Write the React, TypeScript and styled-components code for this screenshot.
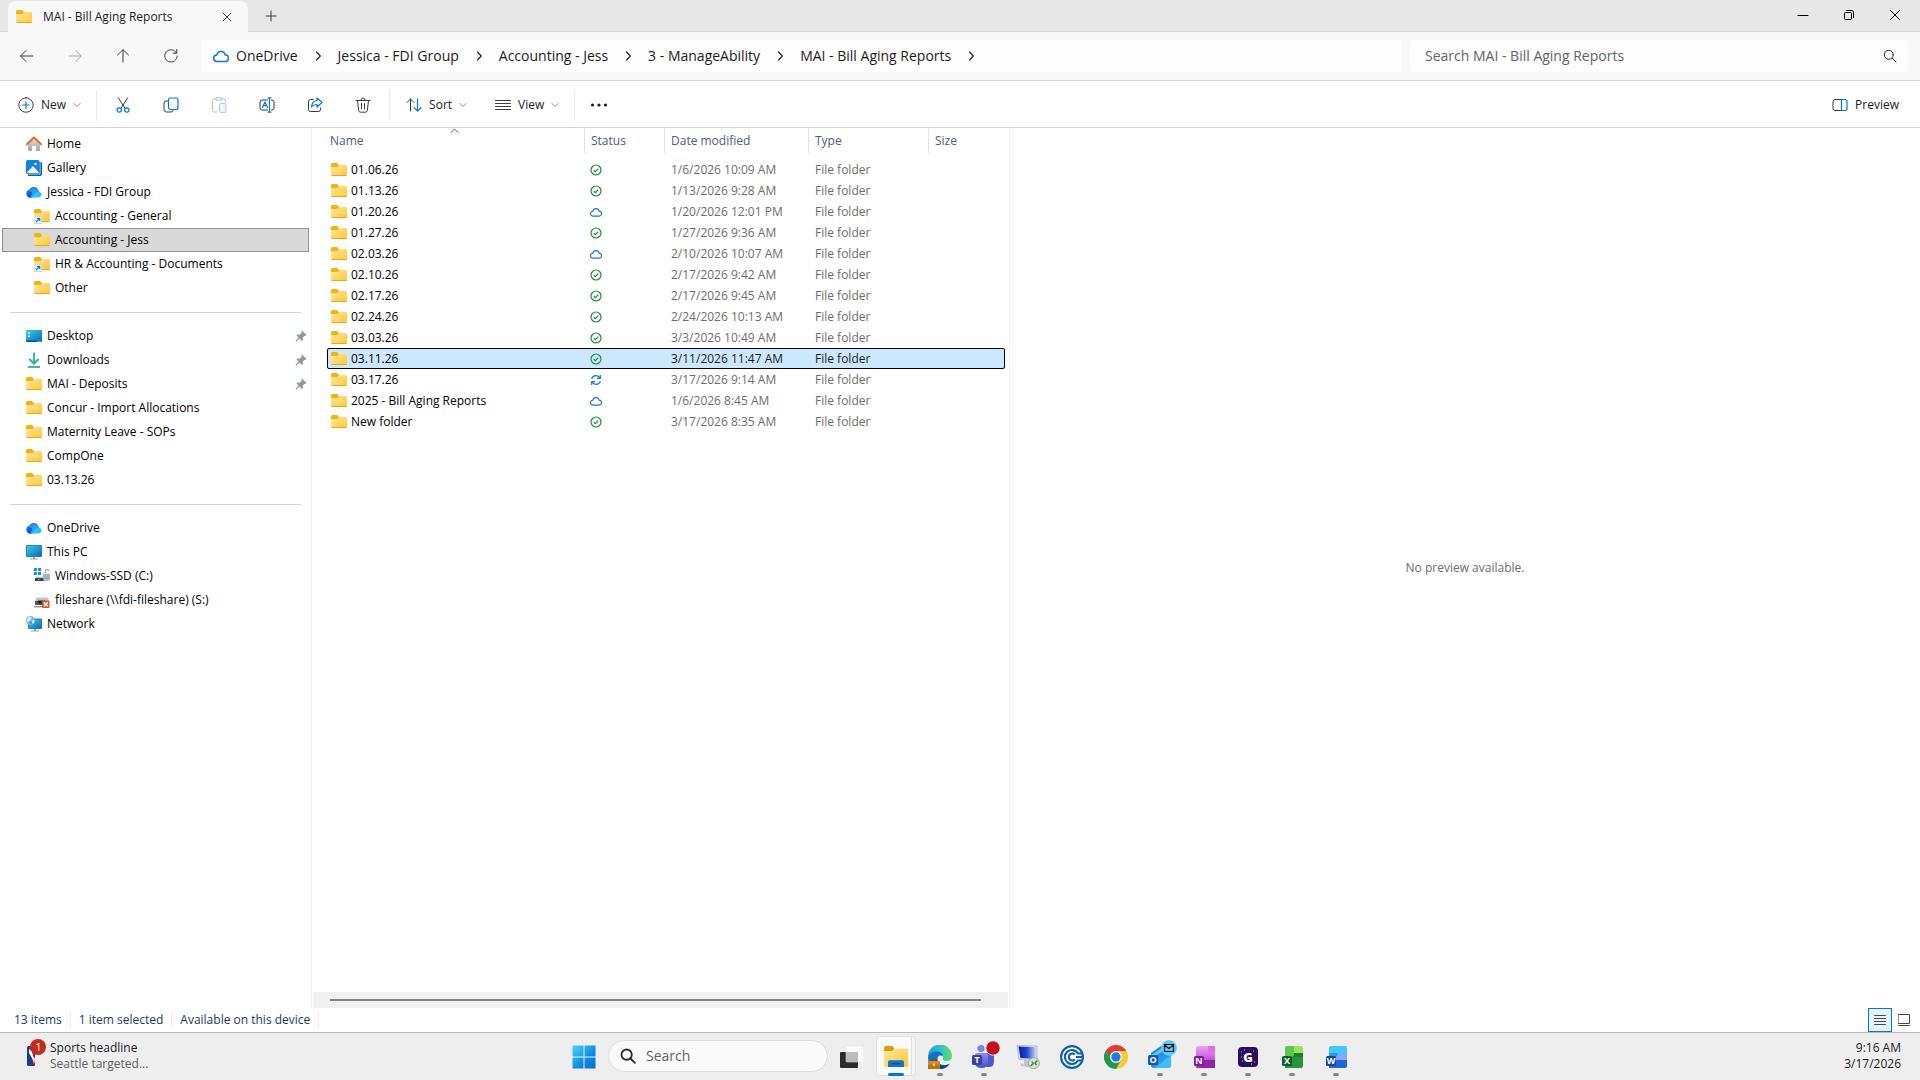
import React from "react";
import styled, { createGlobalStyle } from "styled-components";

const GlobalStyle = createGlobalStyle`
  *, *::before, *::after { box-sizing: border-box; }
  html, body { margin: 0; padding: 0; }
  body, button, input, table {
    font-family: "Segoe UI", "Open Sans", "Noto Sans", sans-serif;
    font-size: 12px;
    line-height: 16px;
  }
  body { background: #fff; color: #000; overflow: hidden; }
  button { border: 0; padding: 0; margin: 0; background: transparent; color: inherit; cursor: default; }
  a { color: inherit; text-decoration: none; cursor: default; }
  ul, ol { list-style: none; margin: 0; padding: 0; }
  svg { display: block; flex: none; }
`;

/* ---------- layout ---------- */

const Desktop = styled.div`
  display: flex;
  flex-direction: column;
  height: 100vh;
`;

const TitleBar = styled.header`
  display: flex;
  align-items: stretch;
  height: 32px;
  padding: 0 2px 0 8px;
  background: #e7e7e7;
  box-shadow: inset 0 -1px #d6d6d6;
`;

const Tab = styled.div`
  display: flex;
  align-items: center;
  width: 240px;
  margin-top: 1px;
  padding: 0 8px;
  gap: 11px;
  border-radius: 8px 8px 0 0;
  background: #f8f8f8;
  color: #1b1b1b;
  font-weight: 500;
`;

const TabTitle = styled.span`
  flex: 1;
  white-space: nowrap;
`;

const IconButton = styled.button<{ $w?: number; $h?: number }>`
  display: flex;
  align-items: center;
  justify-content: center;
  width: ${(p) => p.$w ?? 32}px;
  height: ${(p) => p.$h ?? 32}px;
  flex: none;
`;

const WindowControls = styled.div`
  display: flex;
  margin-left: auto;
`;

const NavBar = styled.nav`
  display: flex;
  align-items: center;
  height: 49px;
  padding: 0 11px 0 3px;
  background: #f8f8f8;
  border-bottom: 1px solid #d6d6d6;
`;

const AddressBar = styled.ol`
  display: flex;
  align-items: center;
  flex: 1;
  height: 32px;
  margin-left: 6px;
  padding-left: 12px;
  border-radius: 4px;
  background: #fdfdfd;
`;

const Crumb = styled.li`
  display: flex;
  align-items: center;
  color: #1b1b1b;
  white-space: nowrap;
`;

const CrumbLink = styled.a`
  display: flex;
  align-items: center;
  gap: 7px;
  font-size: 14px;
  line-height: 20px;
`;

const SearchField = styled.label`
  display: flex;
  align-items: center;
  width: 499px;
  height: 32px;
  margin-left: 8px;
  padding: 0 12px 0 15px;
  border-radius: 4px;
  background: #fdfdfd;
`;

const TextInput = styled.input`
  flex: 1;
  min-width: 0;
  padding: 0;
  border: 0;
  outline: 0;
  background: transparent;
  font-size: 14px;
  line-height: 20px;
  &::placeholder { color: #636363; opacity: 1; }
`;

const Toolbar = styled.div`
  display: flex;
  align-items: center;
  height: 47px;
  padding: 2px 21px 0 0;
  background: #fff;
  border-bottom: 1px solid #d6d6d6;
`;

const ToolGroup = styled.div<{ $pad: string; $gap?: number }>`
  display: flex;
  align-items: center;
  height: 31px;
  padding: ${(p) => p.$pad};
  gap: ${(p) => p.$gap ?? 0}px;
  border-right: 1px solid #e9e9e9;
`;

const ToolButton = styled.button`
  display: flex;
  align-items: center;
  height: 31px;
  gap: 7px;
  color: #1b1b1b;
`;

const Spacer = styled.div`
  flex: 1;
`;

const Body = styled.div`
  display: flex;
  flex: 1;
  min-height: 0;
`;

const Sidebar = styled.aside`
  width: 312px;
  padding: 4px 2px 0;
  border-right: 1px solid #f2f2f2;
`;

const TreeItem = styled.li``;

const TreeLink = styled.a<{ $indent?: boolean; $selected?: boolean }>`
  display: flex;
  align-items: center;
  gap: 5px;
  height: 24px;
  padding: 0 2px 0 ${(p) => (p.$indent ? 32 : 24)}px;
  white-space: nowrap;
  background: ${(p) => (p.$selected ? "#d9d9d9" : "transparent")};
  box-shadow: ${(p) => (p.$selected ? "inset 0 0 0 1px #919191" : "none")};
`;

const Divider = styled.hr`
  height: 1px;
  margin: 12px 8px 11px;
  border: 0;
  background: #d3d3d3;
`;

const ListPane = styled.main`
  display: flex;
  flex-direction: column;
  width: 698px;
  border-right: 1px solid #f2f2f2;
`;

const FileTable = styled.table`
  width: 678px;
  margin-left: 15px;
  table-layout: fixed;
  border-collapse: collapse;
`;

const HeadCell = styled.th`
  position: relative;
  height: 31px;
  padding: 0;
  vertical-align: top;
  text-align: left;
  font-weight: 400;
`;

const HeadButton = styled.button<{ $first?: boolean; $last?: boolean }>`
  display: block;
  width: 100%;
  height: 25px;
  padding-left: ${(p) => (p.$first ? 3 : 6)}px;
  border-right: ${(p) => (p.$last ? 0 : 1)}px solid #e2e2e2;
  text-align: left;
  color: #4c607a;
`;

const SortCaret = styled.span`
  position: absolute;
  top: 0;
  left: 50%;
  margin-left: -6px;
`;

const Row = styled.tr<{ $selected?: boolean }>`
  height: 21px;
  color: ${(p) => (p.$selected ? "#1b1b1b" : "#6d6d6d")};
  background: ${(p) => (p.$selected ? "#cce8ff" : "transparent")};
  outline: ${(p) => (p.$selected ? "1px solid #000" : "0")};
  outline-offset: -1px;
  border-radius: 2px;
`;

const Cell = styled.td<{ $icon?: boolean }>`
  padding: 0 0 0 ${(p) => (p.$icon ? 5 : 6)}px;
  white-space: nowrap;
`;

const NameCell = styled.td`
  padding: 0 0 0 4px;
  color: #000;
`;

const NameBox = styled.div`
  display: flex;
  align-items: center;
  gap: 4px;
`;

const ScrollTrack = styled.div`
  display: flex;
  align-items: center;
  height: 16px;
  margin: auto 1px 0;
  padding: 0 27px 0 17px;
  background: #f0f0f0;
`;

const ScrollThumb = styled.div`
  flex: 1;
  height: 2px;
  background: #858585;
`;

const PreviewPane = styled.section`
  display: flex;
  flex: 1;
  align-items: center;
  justify-content: center;
  color: #6d6d6d;
`;

const StatusBar = styled.footer`
  display: flex;
  align-items: center;
  height: 25px;
  padding: 0 4px 0 6px;
  border-bottom: 1px solid #bababa;
  color: #1e395b;
`;

const StatusText = styled.span`
  padding: 0 8px;
  border-right: 1px solid #f0f0f0;
`;

const ViewToggle = styled.button<{ $on?: boolean }>`
  display: flex;
  align-items: center;
  justify-content: center;
  width: 24px;
  height: 24px;
  background: ${(p) => (p.$on ? "#e5f3fc" : "transparent")};
  box-shadow: ${(p) => (p.$on ? "inset 0 0 0 1px #0078d7" : "none")};
`;

const Taskbar = styled.footer`
  display: grid;
  grid-template-columns: 1fr auto 1fr;
  align-items: center;
  height: 47px;
  padding-bottom: 2px;
  background: #eeeeee;
`;

const Widget = styled.button`
  display: flex;
  align-items: center;
  gap: 4px;
  padding-left: 26px;
  text-align: left;
  color: #1b1b1b;
`;

const WidgetSub = styled.span`
  display: block;
  color: #5f5f5f;
`;

const AppList = styled.div`
  display: flex;
  align-items: center;
`;

const TaskSearch = styled.label`
  display: flex;
  align-items: center;
  gap: 10px;
  width: 220px;
  height: 32px;
  margin: 0 2px;
  padding: 0 11px;
  border: 1px solid #dcdcdc;
  border-radius: 16px;
  background: #fafafa;
`;

const AppButton = styled.button<{ $run?: boolean; $active?: boolean }>`
  display: flex;
  flex-direction: column;
  align-items: center;
  justify-content: space-between;
  width: 44px;
  height: 40px;
  padding-top: 7px;
  border-radius: 4px;
  &::after {
    content: "";
    width: ${(p) => (p.$active ? 16 : 6)}px;
    height: 3px;
    border-radius: 2px;
    background: ${(p) => (p.$active ? "#0078d4" : p.$run ? "#878787" : "transparent")};
  }
`;

const ActiveApp = styled(AppButton)`
  width: 40px;
  margin: 0 2px;
  background: linear-gradient(90deg, #fafafa 35px, #dedede 35px, #dedede 36px, #f5f5f5 36px);
  box-shadow: inset 0 0 0 1px #e0e0e0;
`;

const AppIcon = styled.span`
  display: flex;
  align-items: center;
  justify-content: center;
  height: 28px;
`;

const Clock = styled.time`
  padding-right: 19px;
  text-align: right;
  color: #1b1b1b;
`;

/* ---------- icons ---------- */

const INK = "#3b3b3b";
const BLUE = "#0078d4";

const GradientSheet = styled.svg`
  position: absolute;
`;

const Gradients = () => (
  <GradientSheet width="0" height="0" aria-hidden="true">
    <defs>
      <linearGradient id="folder" x1="0" y1="0" x2="1" y2="1">
        <stop offset="0" stopColor="#ffe9a0" /><stop offset="1" stopColor="#ffc634" />
      </linearGradient>
      <linearGradient id="screen" x1="0" y1="0" x2="1" y2="1">
        <stop offset="0" stopColor="#35d3e2" /><stop offset="1" stopColor="#0b66b8" />
      </linearGradient>
      <linearGradient id="win" x1="0" y1="0" x2="1" y2="1">
        <stop offset="0" stopColor="#4fd3fd" /><stop offset=".6" stopColor="#0d8be0" /><stop offset="1" stopColor="#0072cf" />
      </linearGradient>
      <linearGradient id="edgeTop" x1="0" y1="0" x2="1" y2="0">
        <stop offset="0" stopColor="#1c9de0" /><stop offset=".5" stopColor="#2fc2d0" /><stop offset="1" stopColor="#63dd5c" />
      </linearGradient>
      <linearGradient id="home" x1="0" y1="0" x2="0" y2="1">
        <stop offset="0" stopColor="#dcdcdc" /><stop offset="1" stopColor="#a5a5a5" />
      </linearGradient>
      <linearGradient id="teams" x1="0" y1="0" x2="0" y2="1">
        <stop offset="0" stopColor="#8a92f5" /><stop offset="1" stopColor="#4b4fc4" />
      </linearGradient>
      <linearGradient id="note" x1="0" y1="0" x2="0" y2="1">
        <stop offset="0" stopColor="#f2a1f5" /><stop offset="1" stopColor="#a62bc4" />
      </linearGradient>
      <linearGradient id="outlook" x1="0" y1="0" x2="1" y2="1">
        <stop offset="0" stopColor="#1767c8" /><stop offset="1" stopColor="#35c0fb" />
      </linearGradient>
      <linearGradient id="rdp" x1="0" y1="0" x2="1" y2="0">
        <stop offset="0" stopColor="#0a1aa0" /><stop offset=".5" stopColor="#2446d0" /><stop offset="1" stopColor="#b4cdf8" />
      </linearGradient>
    </defs>
  </GradientSheet>
);

const Folder = ({ link }: { link?: boolean }) => (
  <svg width="16" height="16" viewBox="0 0 16 16">
    <path d="M0 2.500Q0 1 1.500 1H6l2 2v3H0z" fill="#f6b10c" />
    <path d="M0 5h6.500L8.500 3H15q1 0 1 1v9q0 1-1 1H1q-1 0-1-1z" fill="url(#folder)" />
    <path d="M.2 13.300q.3.700 1 .700h13.600q.7 0 1-.700z" fill="#e39a12" />
    {link && (
      <g>
        <rect x=".5" y="8.500" width="7" height="7" fill="#fff" stroke="#d5d5d5" />
        <path d="M2 14l3.500-3.500M3 10.300h2.700V13" stroke="#0078d4" strokeWidth="1.300" fill="none" />
      </g>
    )}
  </svg>
);

const HomeIcon = () => (
  <svg width="16" height="16" viewBox="0 0 16 16">
    <path d="M2 7.500L8 2l6 5.500V14q0 1-1 1h-3v-5H6v5H3q-1 0-1-1z" fill="url(#home)" />
    <path d="M.7 8.300L8 1.500l7.300 6.800" fill="none" stroke="#e2621b" strokeWidth="1.800" strokeLinejoin="round" strokeLinecap="round" />
  </svg>
);

const GalleryIcon = () => (
  <svg width="16" height="16" viewBox="0 0 16 16">
    <path d="M4 2h11q1 0 1 1v11q0 2-2 2H2v-2z" fill="#0b5fae" />
    <path d="M14 1.500V14H1.500" fill="none" stroke="#fff" strokeWidth=".8" />
    <rect width="13.500" height="14" rx="1.500" fill="#1183d8" />
    <path d="M1 12.500L7 6l6 6.500q-.5.700-1 .700H2z" fill="#f2fbff" />
    <rect x="8.500" y="3" width="2" height="2" fill="#fff" />
  </svg>
);

const OneDriveIcon = () => (
  <svg width="16" height="16" viewBox="0 0 16 16">
    <path d="M4 13.500a3.900 3.900 0 0 1-.6-7.700A5 5 0 0 1 12 5.200l-5 8.300z" fill="#1a6fe0" />
    <path d="M3 8.500Q6 2 12 5.200q1 1 1 2.300L6 13.500H4Q1.500 13 3 8.500z" fill="#2b9bf4" />
    <path d="M5 13.500l4.500-5q2-1.800 4-.8A3 3 0 0 1 13 13.500z" fill="#27c3f7" />
    <path d="M1 11.500Q2.500 8 6 7.500L4.800 13.500H4q-2.300 0-3-2z" fill="#1556d6" />
  </svg>
);

const DesktopIcon = () => (
  <svg width="16" height="16" viewBox="0 0 16 16">
    <rect y="2" width="16" height="12" rx="1" fill="url(#screen)" />
    <path d="M2 4.500h2v1.500H2zM2 7.500h2V9H2z" fill="#fff" />
    <path d="M0 12.500h16V13q0 1-1 1H1q-1 0-1-1z" fill="#0a4f94" />
    <path d="M11.500 12.700h1v1h-1zM13.500 12.700h1v1h-1z" fill="#fff" />
  </svg>
);

const DownloadIcon = () => (
  <svg width="16" height="16" viewBox="0 0 16 16">
    <path d="M8 .500v11M3.300 7L8 11.700 12.700 7" fill="none" stroke="#27b397" strokeWidth="1.800" />
    <path d="M2 15h12" stroke="#1ea48c" strokeWidth="1.600" />
  </svg>
);

const PcIcon = () => (
  <svg width="16" height="16" viewBox="0 0 16 16">
    <rect x=".4" y="1.400" width="15.200" height="11.200" rx=".6" fill="url(#screen)" stroke="#14609b" strokeWidth=".8" />
    <path d="M7 13h2v2H7zM4 14.500h8v1H4z" fill="#9aa3ab" />
  </svg>
);

const DriveIcon = () => (
  <svg width="16" height="16" viewBox="0 0 16 16">
    <path d="M0 0h3v3H0zM4 0h3v3H4zM0 4h3v3H0zM4 4h3v3H4z" fill="#1290e2" />
    <path d="M2 8.500h9v1.500H2z" fill="#c9c9c9" />
    <path d="M1 10h11v3H1z" fill="#3d4347" />
    <path d="M4 11h1.500v1H4z" fill="#4fe04f" />
    <path d="M11.500 5.500V3q0-1.700 1.500-1.700T14.500 3" fill="none" stroke="#a5adb3" strokeWidth="1.300" />
    <path d="M9 5.500h7V11q-1 2.500-3.500 2.500T9 11z" fill="#b7bfc5" />
    <path d="M9 8h7M9 10.500h7" stroke="#5f9fd0" strokeWidth=".8" />
  </svg>
);

const ShareDriveIcon = () => (
  <svg width="16" height="16" viewBox="0 0 16 16">
    <path d="M2.500 5.500h11L15 9H1z" fill="#c3c3c3" />
    <path d="M1 9h14v4H1z" fill="#55595c" />
    <path d="M4 8.500h7v3H4z" fill="#222" />
    <path d="M0 14h9v1.500H0z" fill="#9b9b9b" />
    <rect x="8" y="8.500" width="7.500" height="7.500" rx="1" fill="#d8572a" />
    <path d="M9.800 10.300l4 4M13.800 10.300l-4 4" stroke="#fff" strokeWidth="1.400" />
  </svg>
);

const NetworkIcon = () => (
  <svg width="16" height="16" viewBox="0 0 16 16">
    <rect x="2.500" y="3" width="13.200" height="9.600" rx=".6" fill="url(#screen)" stroke="#14609b" strokeWidth=".8" />
    <path d="M8 13h2v2H8zM5 14.500h8v1H5z" fill="#9aa3ab" />
    <circle cx="4.500" cy="4.500" r="4.500" fill="#7fb6d6" />
    <path d="M1 3q2-2.500 4-2.500Q6 2 4.500 4T2 6.500Q.5 5 1 3zM6 5l2.500-1Q8.700 6.500 7 8z" fill="#d9eef7" />
    <path d="M3 5.500l3 .5-1 2.500z" fill="#3f83ad" />
  </svg>
);

const PinBox = styled.span`
  margin-left: auto;
`;

const PinIcon = () => (
  <PinBox>
    <svg width="12" height="12" viewBox="0 0 12 12">
      <path d="M7 .6l4.600 4.400-1 .8-1-.1-1.800 2 .1 2.200-1 1L4.600 8.700 1.500 11.500l-.9.200.2-.9L3.600 7.600 1.300 5.400l1-1 2.300.2L6.600 2.800 6.500 1.400z" fill="#8f9ba5" />
    </svg>
  </PinBox>
);

const CloudOutline = ({ size = 12 }: { size?: number }) => (
  <svg width={size} height={size} viewBox="0 0 14 14">
    <path d="M3.500 11.800a2.800 2.800 0 0 1-.2-5.600A3.700 3.700 0 0 1 10.600 6a2.900 2.900 0 0 1-.1 5.800z" fill="none" stroke="#1476d4" strokeWidth="1.300" />
  </svg>
);

const SyncedIcon = () => (
  <svg width="12" height="12" viewBox="0 0 12 12">
    <circle cx="6" cy="6" r="5" fill="none" stroke="#1f8c36" strokeWidth="1.200" />
    <path d="M3.800 6.200l1.600 1.500 2.900-3" fill="none" stroke="#1f8c36" strokeWidth="1.200" />
  </svg>
);

const SyncingIcon = () => (
  <svg width="12" height="12" viewBox="0 0 12 12">
    <path d="M1.500 4.800Q2.800 1.700 6 1.700q2.500 0 4 2.300M10.300 1v3.300H7M10.500 7.200Q9.200 10.300 6 10.300q-2.500 0-4-2.300M1.700 11V7.700H5" fill="none" stroke="#1476d4" strokeWidth="1.200" />
  </svg>
);

type LineProps = { d: string; size?: number; color?: string; w?: number; children?: React.ReactNode };
const Line = ({ d, size = 16, color = INK, w = 1, children }: LineProps) => (
  <svg width={size} height={size} viewBox={`0 0 ${size} ${size}`} fill="none" stroke={color} strokeWidth={w} strokeLinecap="round" strokeLinejoin="round">
    <path d={d} />
    {children}
  </svg>
);

const ChevronRight = () => <Line size={12} d="M4.500 2L8.300 6 4.500 10" color="#1b1b1b" w={1.1} />;
const ChevronDown = () => <Line size={8} d="M1 2.500l3 3 3-3" color="#8a8a8a" />;
const Magnifier = ({ size = 14, w = 1 }: { size?: number; w?: number }) => (
  <svg width={size} height={size} viewBox="0 0 14 14" fill="none" stroke="#2b2b2b" strokeWidth={w} strokeLinecap="round">
    <circle cx="5.800" cy="5.800" r="4.500" /><path d="M9.200 9.200l3.800 3.800" />
  </svg>
);

const NewIcon = () => <Line d="M8 .800a7.200 7.200 0 1 0 .01 0z"><path d="M8 4.800v6.400M4.800 8h6.400" stroke={BLUE} strokeWidth="1.200" /></Line>;
const CutIcon = () => (
  <Line d="M3.300.800L10 11.300M12.700.800L6 11.300">
    <circle cx="4.200" cy="13" r="2.200" stroke={BLUE} strokeWidth="1.200" /><circle cx="11.800" cy="13" r="2.200" stroke={BLUE} strokeWidth="1.200" />
  </Line>
);
const CopyIcon = () => <Line d="M4.500 4H3Q1 4 1 6v6.500Q1 15 3.500 15H8q1.800 0 2-1.500"><rect x="5.500" y="1" width="9.500" height="11.500" rx="2" stroke={BLUE} strokeWidth="1.200" /></Line>;
const PasteIcon = () => (
  <Line color="#bdbdbd" d="M5 2H3Q1.500 2 1.500 3.500v10Q1.500 15 3 15h3M11 2h2q1.500 0 1.500 1.500V5M5.500.800h5v2.400h-5z">
    <rect x="8.500" y="6.500" width="6.500" height="9" rx="1.200" stroke="#9fcdf0" fill="#eef6fd" />
  </Line>
);
const RenameIcon = () => (
  <Line d="M8.500 3H3Q1 3 1 5v6q0 2 2 2h5.500M12.500 3H13q2 0 2 2v6q0 2-2 2h-.5">
    <path d="M3.500 10.500L6 5l2.500 5.500M4.400 8.700h3.200M10.500 1v14M9 .800h3M9 15.200h3" stroke={BLUE} strokeWidth="1.200" />
  </Line>
);
const ShareIcon = () => (
  <Line d="M6 2.500H3.500q-2 0-2 2v8q0 2 2 2h8q2 0 2-2V11">
    <path d="M10 1l5 4.500L10 10V7.500Q6.500 7.300 4.500 10 5 4 10 3.500z" stroke={BLUE} strokeWidth="1.200" />
  </Line>
);
const TrashIcon = () => <Line d="M1 3.500h14M5.800 3.300Q6 1 8 1t2.200 2.300M2.500 3.700l1.200 9.800q.2 1.700 1.800 1.700h5q1.600 0 1.800-1.700l1.200-9.800M6.500 6.500v5.500M9.500 6.500v5.500" />;
const SortIcon = () => <Line d="M4.500 14V2M1 5.500L4.500 2 8 5.500"><path d="M11.500 2v12M8.300 10.800l3.200 3.200 3.500-3.200" stroke={BLUE} strokeWidth="1.200" /></Line>;
const ViewIcon = () => <Line d="M.500 3.500h15M.500 6.500h15M.500 9.500h15M.500 12.500h15" />;
const PreviewIcon = () => <Line d="M9.500 2.500H3q-2 0-2 2v7q0 2 2 2h6.500"><path d="M9.500 2.500H13q2 0 2 2v7q0 2-2 2H9.500z" stroke={BLUE} strokeWidth="1.200" /></Line>;

/* taskbar logos */

const StartLogo = () => (
  <svg width="24" height="24" viewBox="0 0 24 24"><path d="M.500.500h11v11H.500zM12.500.500h11v11h-11zM.500 12.500h11v11H.500zM12.500 12.500h11v11h-11z" fill="url(#win)" /></svg>
);
const TaskViewLogo = () => (
  <svg width="24" height="24" viewBox="0 0 24 24">
    <rect y="7" width="18" height="16" rx="1" fill="#2b2b2b" />
    <rect x="6" y="1" width="18" height="16" rx="1" fill="#fff" fillOpacity=".72" stroke="#e3e3e3" strokeWidth=".6" />
    <path d="M6 7h12v10H6z" fill="#bcbcbc" />
  </svg>
);
const ExplorerLogo = () => (
  <svg width="24" height="24" viewBox="0 0 24 24">
    <path d="M0 2.500Q0 1 1.500 1H8.500l1.500 2v4H0z" fill="#dd9a08" />
    <path d="M0 6h8l2.500-2.500H23q1 0 1 1V21q0 1-1 1H1q-1 0-1-1z" fill="url(#folder)" />
    <path d="M4 22v-5q0-1.700 1.700-1.700h12.600q1.700 0 1.700 1.700v5z" fill="#1277c8" />
    <path d="M7.500 18.700h9" stroke="#0a4f91" strokeWidth="1.400" />
  </svg>
);
const EdgeLogo = () => (
  <svg width="24" height="24" viewBox="0 0 24 24">
    <path d="M0 12A12 12 0 0 1 24 11q0 5-5.500 5-4.500 0-3.500-2.500Q15.500 8 10 8 3 8 0 12z" fill="url(#edgeTop)" />
    <path d="M0 12q2.500-5.500 8-5.500 6.500 0 7 5-1.500-1.500-3.500-1-3 1.500-1.500 6 2.500 5 10 3Q16.500 24 12 24 0 23.500 0 12z" fill="#1370c4" />
    <path d="M9 14q.5 5.500 5 6.500 4 .500 8-2-3.500 5.500-10 5.500z" fill="#0b468c" />
    <path d="M0 16h12v8H0z" fill="#c06f14" /><path d="M0 16h12v3.500H0z" fill="#d98c20" />
    <path d="M4 16v-1.500h4V16" fill="none" stroke="#7b4308" strokeWidth="1.200" /><path d="M5 18.800h2v2H5z" fill="#ffe27a" />
  </svg>
);
const AppLetter = ({ x, y, s, fill, letter }: { x: number; y: number; s: number; fill: string; letter: string }) => (
  <g>
    <rect x={x} y={y} width={s} height={s} rx="1.500" fill={fill} />
    <text x={x + s / 2} y={y + s / 2 + 3} textAnchor="middle" fontSize="9" fontWeight="700" fill="#fff">{letter}</text>
  </g>
);
const TeamsLogo = () => (
  <svg width="30" height="28" viewBox="-2 0 30 28" overflow="visible">
    <circle cx="10" cy="5.500" r="3.600" fill="#7b84ee" />
    <path d="M15 10h6q2 0 2 2v7q0 5-5 5h-5z" fill="#5058d0" />
    <path d="M4 12q0-2 2-2h9q2 0 2 2v7q0 6-6.500 6T4 19z" fill="url(#teams)" />
    <AppLetter x={1} y={12} s={10} fill="#3b3f9e" letter="T" />
    <circle cx="22" cy="5" r="7.200" fill="#c50f1f" stroke="#fff" strokeWidth=".8" />
  </svg>
);
const RdpLogo = () => (
  <svg width="24" height="24" viewBox="-1 0 24 24">
    <path d="M0 0l20 1v14.500L2 14.500z" fill="#d9dde2" stroke="#a9adb3" strokeWidth=".7" />
    <path d="M1.500 1.500l17 .7V14l-15-1z" fill="url(#rdp)" />
    <path d="M7 15l6 .5v4l-6-.5zM3 18.500l12 1-1 3L4 21z" fill="#c2c6cc" />
    <circle cx="17" cy="18.200" r="5.500" fill="#dcdfe0" stroke="#96999b" strokeWidth=".8" />
    <path d="M13.500 21l2.700-2.300-1.300-2M20.500 15.500l-2.500 2.500 1.600 2" fill="none" stroke="#3c8c33" strokeWidth="1.500" />
  </svg>
);
const CircleLogo = () => (
  <svg width="24" height="24" viewBox="0 0 24 24" fill="none" stroke="#0f61a8" strokeWidth="2.200">
    <circle cx="12" cy="12" r="10.900" fill="#fafcff" />
    <path d="M22.500 8.500H18A7 7 0 1 0 18 15.500H22.500" />
    <path d="M22.500 12H16M14.800 9.500A3.500 3.500 0 1 0 14.800 14.500" />
  </svg>
);
const ChromeLogo = () => (
  <svg width="24" height="24" viewBox="0 0 24 24">
    <path d="M12 12L1.600 6A12 12 0 0 1 22.400 6z" fill="#e33b2e" />
    <path d="M12 12V6h10.400A12 12 0 0 1 12 24z" fill="#fcc934" />
    <path d="M17.200 15L12 24A12 12 0 0 1 1.600 6L6.800 15z" fill="#1e9a4b" />
    <path d="M1.600 6h20.800H12L6.800 15z" fill="#e33b2e" /><path d="M1.600 6L6.800 15 12 18V12z" fill="#1e9a4b" />
    <circle cx="12" cy="12" r="6" fill="#fff" /><circle cx="12" cy="12" r="4.700" fill="#2b78e4" />
  </svg>
);
const OutlookLogo = () => (
  <svg width="32" height="28" viewBox="-2 0 32 28" overflow="visible">
    <path d="M5 10L15 3l10 7v12q0 3-3 3H8q-3 0-3-3z" fill="url(#outlook)" />
    <path d="M5 12L17 4l3 2-13 9z" fill="#59c7fa" /><path d="M25 12v10q0 3-3 3H9z" fill="#3fbdf8" />
    <AppLetter x={2} y={12} s={10} fill="#1058a8" letter="O" />
    <circle cx="23" cy="5" r="7.800" fill="#5ac8fa" />
    <path d="M18.500 1.500h9v7h-9zM18.500 2L23 5.500l4.500-3.500" fill="none" stroke="#111" strokeWidth="1.100" />
  </svg>
);
const OneNoteLogo = () => (
  <svg width="24" height="24" viewBox="0 0 24 24">
    <path d="M4 3q0-2 2-2h17v20q0 2-2 2H4z" fill="url(#note)" />
    <path d="M16 1h7v8h-5q-2 0-2-2z" fill="#e16ef0" /><path d="M12 15h11v8H6q6-1 6-8z" fill="#8e24b0" />
    <AppLetter x={2} y={11} s={10} fill="#7a1c9c" letter="N" />
  </svg>
);
const GLogo = () => (
  <svg width="24" height="24" viewBox="0 0 24 24">
    <rect x="2" y="2" width="20" height="20" rx="4" fill="#2a0f5c" />
    <text x="12" y="17" textAnchor="middle" fontSize="13" fontWeight="800" fill="#fff">G</text>
    <path d="M5 7h1M6 16h1M17 6h1M18 17h1M8 5h1M5 12h1M15 19h1" stroke="#d9a8ff" strokeWidth="1" />
  </svg>
);
const ExcelLogo = () => (
  <svg width="24" height="24" viewBox="0 0 24 24">
    <path d="M5 3q0-2 2-2h7v12H5z" fill="#5fc84a" /><path d="M14 1h7q2 0 2 2v5h-9z" fill="#9be35a" />
    <path d="M14 8h9v13q0 2-2 2H5V12h6q3 0 3-4z" fill="#2a9238" /><path d="M14 8h9v4h-9z" fill="#14803c" />
    <AppLetter x={2} y={11} s={10} fill="#115c30" letter="X" />
  </svg>
);
const WordLogo = () => (
  <svg width="24" height="24" viewBox="0 0 24 24">
    <path d="M5 3q0-2 2-2h14q2 0 2 2v5H5z" fill="#42c9fb" /><path d="M13 8h10v8H5v-3q6 0 8-5z" fill="#8aa6f5" />
    <path d="M5 8h9q-1 6-9 7z" fill="#2d97ef" /><path d="M5 15h18v6q0 2-2 2H5z" fill="#1b66d8" />
    <AppLetter x={2} y={11} s={10} fill="#1a4596" letter="W" />
  </svg>
);
const NewsIcon = () => (
  <svg width="20" height="36" viewBox="0 0 20 36">
    <rect x="1" y="8" width="8" height="20" rx="1.500" fill="#17408b" />
    <path d="M6 14l3 6v6.500q0 1.500-1.500 1.500L6 22z" fill="#c9082a" />
    <path d="M3 11l3 2 1 5 2 3-1 5-1.500-5L3 15z" fill="#fff" />
    <circle cx="12" cy="9" r="8" fill="#c42b1c" />
    <text x="12.500" y="13" textAnchor="middle" fontSize="11" fill="#fff">1</text>
  </svg>
);

/* ---------- data ---------- */

type Item = { label: string; icon: React.ReactNode; indent?: boolean; selected?: boolean; pinned?: boolean };

const groups: Item[][] = [
  [
    { label: "Home", icon: <HomeIcon /> },
    { label: "Gallery", icon: <GalleryIcon /> },
    { label: "Jessica - FDI Group", icon: <OneDriveIcon /> },
    { label: "Accounting - General", icon: <Folder link />, indent: true },
    { label: "Accounting - Jess", icon: <Folder />, indent: true, selected: true },
    { label: "HR & Accounting - Documents", icon: <Folder link />, indent: true },
    { label: "Other", icon: <Folder />, indent: true },
  ],
  [
    { label: "Desktop", icon: <DesktopIcon />, pinned: true },
    { label: "Downloads", icon: <DownloadIcon />, pinned: true },
    { label: "MAI - Deposits", icon: <Folder />, pinned: true },
    { label: "Concur - Import Allocations", icon: <Folder /> },
    { label: "Maternity Leave - SOPs", icon: <Folder /> },
    { label: "CompOne", icon: <Folder /> },
    { label: "03.13.26", icon: <Folder /> },
  ],
  [
    { label: "OneDrive", icon: <OneDriveIcon /> },
    { label: "This PC", icon: <PcIcon /> },
    { label: "Windows-SSD (C:)", icon: <DriveIcon />, indent: true },
    { label: "fileshare (\\\\fdi-fileshare) (S:)", icon: <ShareDriveIcon />, indent: true },
    { label: "Network", icon: <NetworkIcon /> },
  ],
];

type Status = "ok" | "cloud" | "sync";
const files: [string, Status, string][] = [
  ["01.06.26", "ok", "1/6/2026 10:09 AM"],
  ["01.13.26", "ok", "1/13/2026 9:28 AM"],
  ["01.20.26", "cloud", "1/20/2026 12:01 PM"],
  ["01.27.26", "ok", "1/27/2026 9:36 AM"],
  ["02.03.26", "cloud", "2/10/2026 10:07 AM"],
  ["02.10.26", "ok", "2/17/2026 9:42 AM"],
  ["02.17.26", "ok", "2/17/2026 9:45 AM"],
  ["02.24.26", "ok", "2/24/2026 10:13 AM"],
  ["03.03.26", "ok", "3/3/2026 10:49 AM"],
  ["03.11.26", "ok", "3/11/2026 11:47 AM"],
  ["03.17.26", "sync", "3/17/2026 9:14 AM"],
  ["2025 - Bill Aging Reports", "cloud", "1/6/2026 8:45 AM"],
  ["New folder", "ok", "3/17/2026 8:35 AM"],
];
const statusIcon = { ok: <SyncedIcon />, cloud: <CloudOutline />, sync: <SyncingIcon /> };

const crumbs = ["OneDrive", "Jessica - FDI Group", "Accounting - Jess", "3 - ManageAbility", "MAI - Bill Aging Reports"];

const tools: [string, React.ReactNode][] = [
  ["Cut", <CutIcon />], ["Copy", <CopyIcon />], ["Paste", <PasteIcon />],
  ["Rename", <RenameIcon />], ["Share", <ShareIcon />], ["Delete", <TrashIcon />],
];

const apps: [string, React.ReactNode, boolean][] = [
  ["Edge", <EdgeLogo />, true], ["Teams", <TeamsLogo />, true], ["Remote Desktop", <RdpLogo />, false],
  ["Concur", <CircleLogo />, false], ["Chrome", <ChromeLogo />, false], ["Outlook", <OutlookLogo />, true],
  ["OneNote", <OneNoteLogo />, true], ["G", <GLogo />, true], ["Excel", <ExcelLogo />, true], ["Word", <WordLogo />, true],
];

const Col = styled.col<{ $w?: number }>`
  width: ${(p) => (p.$w ? `${p.$w}px` : "auto")};
`;

export default function App() {
  return (
    <Desktop>
      <GlobalStyle />
      <Gradients />
      <TitleBar>
        <Tab>
          <Folder />
          <TabTitle>MAI - Bill Aging Reports</TabTitle>
          <IconButton $w={26} $h={24} aria-label="Close tab"><Line size={12} d="M2 2l8 8M10 2l-8 8" /></IconButton>
        </Tab>
        <IconButton $w={46} aria-label="New tab"><Line size={12} d="M6 1v10M1 6h10" /></IconButton>
        <WindowControls>
          <IconButton $w={46} $h={29} aria-label="Minimize"><Line size={12} d="M1 6.500h10" color="#000" /></IconButton>
          <IconButton $w={46} $h={29} aria-label="Restore">
            <Line size={12} color="#000" d="M3.500 1.500H8.500q2 0 2 2V8.500M2.500 3.500h5q1 0 1 1v5q0 1-1 1h-5q-1 0-1-1v-5q0-1 1-1z" />
          </IconButton>
          <IconButton $w={46} $h={29} aria-label="Close"><Line size={12} color="#000" d="M1.500 1.500l9 9M10.500 1.500l-9 9" /></IconButton>
        </WindowControls>
      </TitleBar>

      <NavBar>
        <IconButton $w={48} aria-label="Back"><Line d="M14 8H2M7 2.500L1.700 8 7 13.500" /></IconButton>
        <IconButton $w={48} aria-label="Forward"><Line color="#a9a9a9" d="M2 8h12M9 2.500L14.300 8 9 13.500" /></IconButton>
        <IconButton $w={48} aria-label="Up"><Line d="M8 14V2M2.500 7L8 1.700 13.500 7" /></IconButton>
        <IconButton $w={48} aria-label="Refresh"><Line d="M13.500 5A6.200 6.200 0 1 0 14.200 8M13.800 1.500V5.200H10" /></IconButton>
        <AddressBar>
          {crumbs.map((c, i) => (
            <Crumb key={c}>
              <CrumbLink href="#">{i === 0 && <CloudOutline size={16} />}{c}</CrumbLink>
              <IconButton $w={40} aria-label={`Open ${c}`}><ChevronRight /></IconButton>
            </Crumb>
          ))}
        </AddressBar>
        <SearchField>
          <TextInput type="text" aria-label="Search this folder" placeholder="Search MAI - Bill Aging Reports" />
          <Magnifier />
        </SearchField>
      </NavBar>

      <Toolbar>
        <ToolGroup $pad="0 15px 0 18px">
          <ToolButton><NewIcon />New<ChevronDown /></ToolButton>
        </ToolGroup>
        <ToolGroup $pad="0 2px">
          {tools.map(([name, icon]) => (
            <IconButton key={name} $w={48} $h={31} aria-label={name}>{icon}</IconButton>
          ))}
        </ToolGroup>
        <ToolGroup $pad="0 15px 0 16px" $gap={28}>
          <ToolButton><SortIcon />Sort<ChevronDown /></ToolButton>
          <ToolButton><ViewIcon />View<ChevronDown /></ToolButton>
        </ToolGroup>
        <IconButton $w={48} $h={31} aria-label="More">
          <svg width="18" height="4" viewBox="0 0 18 4" fill="#1b1b1b"><circle cx="2.500" cy="2" r="1.600" /><circle cx="9" cy="2" r="1.600" /><circle cx="15.500" cy="2" r="1.600" /></svg>
        </IconButton>
        <Spacer />
        <ToolButton><PreviewIcon />Preview</ToolButton>
      </Toolbar>

      <Body>
        <Sidebar>
          {groups.map((g, i) => (
            <React.Fragment key={i}>
              {i > 0 && <Divider />}
              <ul>
                {g.map((it) => (
                  <TreeItem key={it.label}>
                    <TreeLink href="#" $indent={it.indent} $selected={it.selected}>
                      {it.icon}{it.label}{it.pinned && <PinIcon />}
                    </TreeLink>
                  </TreeItem>
                ))}
              </ul>
            </React.Fragment>
          ))}
        </Sidebar>

        <ListPane>
          <FileTable>
            <colgroup>
              <Col $w={258} /><Col $w={80} /><Col $w={144} /><Col $w={120} /><Col />
            </colgroup>
            <thead>
              <tr>
                {["Name", "Status", "Date modified", "Type", "Size"].map((h, i) => (
                  <HeadCell key={h} scope="col">
                    <HeadButton $first={i === 0} $last={i === 4}>{h}</HeadButton>
                    {i === 0 && <SortCaret><Line size={9} color="#5a5a5a" d="M1 4.500L4.500 1 8 4.500" /></SortCaret>}
                  </HeadCell>
                ))}
              </tr>
            </thead>
            <tbody>
              {files.map(([name, status, date]) => (
                <Row key={name} $selected={name === "03.11.26"}>
                  <NameCell><NameBox><Folder />{name}</NameBox></NameCell>
                  <Cell $icon>{statusIcon[status]}</Cell>
                  <Cell>{date}</Cell>
                  <Cell>File folder</Cell>
                  <Cell />
                </Row>
              ))}
            </tbody>
          </FileTable>
          <ScrollTrack><ScrollThumb /></ScrollTrack>
        </ListPane>

        <PreviewPane>No preview available.</PreviewPane>
      </Body>

      <StatusBar>
        <StatusText>13 items</StatusText>
        <StatusText>1 item selected</StatusText>
        <StatusText>Available on this device</StatusText>
        <Spacer />
        <ViewToggle $on aria-label="Details view">
          <Line size={12} color="#4a4a4a" d="M.500 1.500h11M.500 4.500h11M.500 7.500h11M.500 10.500h11" />
        </ViewToggle>
        <ViewToggle aria-label="Large icons view">
          <Line size={12} color="#4a4a4a" d="M.500.500h11v9H.500zM.500 11.500h11" />
        </ViewToggle>
      </StatusBar>

      <Taskbar>
        <Widget>
          <NewsIcon />
          <span>Sports headline<WidgetSub>Seattle targeted...</WidgetSub></span>
        </Widget>
        <AppList>
          <AppButton aria-label="Start"><AppIcon><StartLogo /></AppIcon></AppButton>
          <TaskSearch>
            <Magnifier size={16} w={1.6} />
            <TextInput type="text" aria-label="Search" placeholder="Search" />
          </TaskSearch>
          <AppButton aria-label="Task view"><AppIcon><TaskViewLogo /></AppIcon></AppButton>
          <ActiveApp $active aria-label="File Explorer"><AppIcon><ExplorerLogo /></AppIcon></ActiveApp>
          {apps.map(([name, icon, run]) => (
            <AppButton key={name} $run={run} aria-label={name}><AppIcon>{icon}</AppIcon></AppButton>
          ))}
        </AppList>
        <Clock>9:16 AM<br />3/17/2026</Clock>
      </Taskbar>
    </Desktop>
  );
}
